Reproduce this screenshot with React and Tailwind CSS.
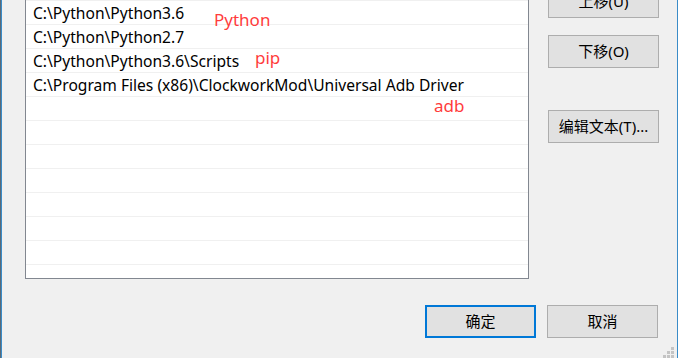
import React from "react";

const paths = [
  "",
  "C:\\Python\\Python3.6",
  "C:\\Python\\Python2.7",
  "C:\\Python\\Python3.6\\Scripts",
  "C:\\Program Files (x86)\\ClockworkMod\\Universal Adb Driver",
  "",
  "",
  "",
  "",
  "",
  "",
  "",
  "",
];

const font = { fontFamily: '"Noto Sans", "Noto Sans CJK SC", sans-serif' };

// Botón clásico de diálogo de Windows
const WinButton = ({ children, focused = false }) => (
  <div
    className={`w-[111px] h-[33px] flex items-center justify-center bg-[#e1e1e1] text-[15px] text-black ${
      focused ? "border-2 border-[#0078d7]" : "border border-[#adadad]"
    }`}
  >
    {children}
  </div>
);

export default function App() {
  return (
    <div
      className="relative w-[678px] h-[358px] overflow-hidden bg-[#f0f0f0] flex"
      style={font}
    >
      {/* borde izquierdo de la ventana */}
      <div className="w-[1px] h-full bg-[#5a6a78]" />
      <div className="w-[1px] h-full bg-[#3a8cc8]" />

      <div className="flex-1 flex flex-col">
        {/* ZONA SUPERIOR: lista + botones */}
        <div className="flex mt-[-24px]">
          <div className="ml-[23px] w-[504px] h-[303px] border border-[#828790] bg-white overflow-hidden">
            {paths.map((p, i) => (
              <div
                key={i}
                className="h-[24px] border-b border-[#f0f0f0] pl-[7px] flex items-center pt-[2px] text-[15.6px] text-black whitespace-nowrap"
              >
                {p}
              </div>
            ))}
          </div>

          <div className="ml-[19px] pt-[9px] flex flex-col">
            <WinButton>上移(U)</WinButton>
            <div className="h-[17px]" />
            <WinButton>下移(O)</WinButton>
            <div className="h-[42px]" />
            <WinButton>编辑文本(T)...</WinButton>
          </div>
        </div>

        {/* BOTONES INFERIORES */}
        <div className="flex justify-end gap-[11px] mt-[26px] pr-[19px]">
          <WinButton focused>确定</WinButton>
          <WinButton>取消</WinButton>
        </div>
      </div>

      {/* borde derecho */}
      <div className="w-[1px] h-full bg-[#3a8cc8]" />

      {/* anotaciones en rojo */}
      <span className="absolute left-[214px] top-[11px] text-[17px] leading-none text-[#ff3c3c]">
        Python
      </span>
      <span className="absolute left-[255px] top-[49px] text-[17px] leading-none text-[#ff3c3c]">
        pip
      </span>
      <span className="absolute left-[434px] top-[97px] text-[17px] leading-none text-[#ff3c3c]">
        adb
      </span>

      {/* agarre de redimensionado */}
      <div className="absolute left-[663px] top-[347px] grid grid-cols-3 gap-[1px]">
        <span className="w-[3px] h-[3px]" />
        <span className="w-[3px] h-[3px]" />
        <span className="w-[3px] h-[3px] bg-[#c4c4c4]" />
        <span className="w-[3px] h-[3px]" />
        <span className="w-[3px] h-[3px] bg-[#c4c4c4]" />
        <span className="w-[3px] h-[3px] bg-[#c4c4c4]" />
        <span className="w-[3px] h-[3px] bg-[#c4c4c4]" />
        <span className="w-[3px] h-[3px] bg-[#c4c4c4]" />
        <span className="w-[3px] h-[3px] bg-[#c4c4c4]" />
      </div>
    </div>
  );
}
